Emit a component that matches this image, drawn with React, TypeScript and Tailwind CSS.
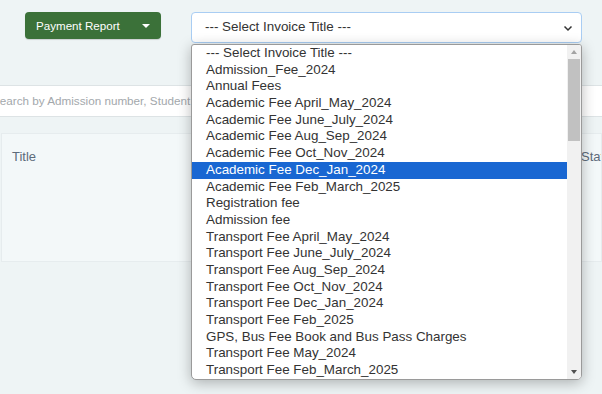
import React from "react";

const items = [
  "--- Select Invoice Title ---",
  "Admission_Fee_2024",
  "Annual Fees",
  "Academic Fee April_May_2024",
  "Academic Fee June_July_2024",
  "Academic Fee Aug_Sep_2024",
  "Academic Fee Oct_Nov_2024",
  "Academic Fee Dec_Jan_2024",
  "Academic Fee Feb_March_2025",
  "Registration fee",
  "Admission fee",
  "Transport Fee April_May_2024",
  "Transport Fee June_July_2024",
  "Transport Fee Aug_Sep_2024",
  "Transport Fee Oct_Nov_2024",
  "Transport Fee Dec_Jan_2024",
  "Transport Fee Feb_2025",
  "GPS, Bus Fee Book and Bus Pass Charges",
  "Transport Fee May_2024",
  "Transport Fee Feb_March_2025",
];

export default function App() {
  return (
    <div
      className="relative h-[394px] w-[602px] overflow-hidden bg-[#eef4f5]"
      style={{ fontFamily: '"Liberation Sans", Arial, sans-serif' }}
    >
      {/* Top row */}
      <div className="flex items-start pt-[12px] pl-[25px]">
        <button className="flex h-[27px] w-[136px] items-center rounded-[4px] bg-[#3b7139] pl-[11px] pr-[10px] text-[11.6px] text-white shadow-[0_1px_1px_rgba(0,0,0,0.15)]">
          <span>Payment Report</span>
          <span className="ml-auto mr-[1px] h-0 w-0 border-x-[4px] border-t-[4px] border-x-transparent border-t-white" />
        </button>
        <div className="relative ml-[30px]">
          <div className="flex h-[31px] w-[391px] items-center rounded-[4px] border border-[#a9cdf3] bg-white pl-[13px] pr-[8px] text-[13.4px] text-[#333]">
            <span>--- Select Invoice Title ---</span>
            <svg className="ml-auto" width="10" height="10" viewBox="0 0 10 10">
              <path d="M1.5 3.5 L5 7 L8.5 3.5" fill="none" stroke="#333" strokeWidth="1.5" />
            </svg>
          </div>
          {/* Dropdown list overlay */}
          <div className="absolute left-0 top-[32px] z-10 flex h-[336px] w-[391px] overflow-hidden rounded-b-[5px] rounded-t-[3px] border border-[#9a9a9a] bg-white shadow-[0_3px_14px_rgba(0,0,0,0.28)]">
            <div className="flex-1">
              {items.map((it, i) => (
                <div
                  key={it}
                  className={
                    i === 7
                      ? "h-[16.7px] bg-[#1967d2] pl-[14px] text-[13.4px] leading-[16.7px] text-white"
                      : "h-[16.7px] pl-[14px] text-[13.4px] leading-[16.7px] text-[#333]"
                  }
                >
                  {it}
                </div>
              ))}
            </div>
            <div className="flex w-[14px] flex-col items-center bg-[#f1f1f1]">
              <div className="flex h-[14px] items-center justify-center">
                <span className="h-0 w-0 border-x-[3.5px] border-b-[4px] border-x-transparent border-b-[#a3a3a3]" />
              </div>
              <div className="h-[82px] w-[12px] bg-[#c1c1c1]" />
              <div className="flex-1" />
              <div className="flex h-[14px] items-center justify-center">
                <span className="h-0 w-0 border-x-[3.5px] border-t-[4px] border-x-transparent border-t-[#505050]" />
              </div>
            </div>
          </div>
        </div>
      </div>

      {/* Search input */}
      <div className="mt-[42px] ml-[-20px] flex h-[32px] items-center whitespace-nowrap border-y border-[#dde3e5] bg-white pl-[12px] text-[11.7px] text-[#a3a8ac]">
        Search by Admission number, Student name
      </div>

      {/* Table card */}
      <div className="mt-[16px] ml-[1px] h-[129px] border border-[#e6ecee] bg-[#f3f8f9]">
        <div className="flex pt-[13px] text-[13px] text-[#5d6b7b]">
          <span className="pl-[10px]">Title</span>
          <span className="ml-auto w-[20px] overflow-hidden whitespace-nowrap">Status</span>
        </div>
      </div>
    </div>
  );
}
